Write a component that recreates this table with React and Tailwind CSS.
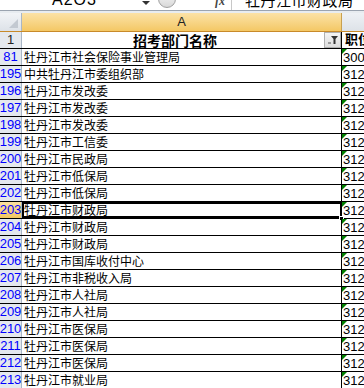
import React from 'react';

const rows = [
  { n: 81, name: '牡丹江市社会保险事业管理局', code: '30020' },
  { n: 195, name: '中共牡丹江市委组织部', code: '31210' },
  { n: 196, name: '牡丹江市发改委', code: '31220' },
  { n: 197, name: '牡丹江市发改委', code: '31220' },
  { n: 198, name: '牡丹江市发改委', code: '31220' },
  { n: 199, name: '牡丹江市工信委', code: '31220' },
  { n: 200, name: '牡丹江市民政局', code: '31220' },
  { n: 201, name: '牡丹江市低保局', code: '31220' },
  { n: 202, name: '牡丹江市低保局', code: '31220' },
  { n: 203, name: '牡丹江市财政局', code: '31220', selected: true },
  { n: 204, name: '牡丹江市财政局', code: '31220' },
  { n: 205, name: '牡丹江市财政局', code: '31220' },
  { n: 206, name: '牡丹江市国库收付中心', code: '31220' },
  { n: 207, name: '牡丹江市非税收入局', code: '31220' },
  { n: 208, name: '牡丹江市人社局', code: '31220' },
  { n: 209, name: '牡丹江市人社局', code: '31220' },
  { n: 210, name: '牡丹江市医保局', code: '31220' },
  { n: 211, name: '牡丹江市医保局', code: '31220' },
  { n: 212, name: '牡丹江市医保局', code: '31220' },
  { n: 213, name: '牡丹江市就业局', code: '31220' },
];

const cjk = "font-['Noto_Sans_CJK_SC',sans-serif]";
const arial = "font-['Liberation_Sans',Arial,sans-serif]";

// little green "number stored as text" flag
const GreenMark = () => (
  <div className="absolute left-0 top-0 w-0 h-0 border-t-[5px] border-r-[5px] border-t-[#008000] border-r-transparent" />
);

const FilterButton = () => (
  <div className="w-[17px] h-[16px] bg-gradient-to-b from-[#f4f4f4] to-[#dcdcdc] border border-[#b0b0b0] flex items-center justify-center">
    <svg width="12" height="10" viewBox="0 0 12 10">
      <path d="M1 8h3" stroke="#555" strokeWidth="1" />
      <path d="M4 1h7l-2.5 3v5h-2V4z" fill="#333" />
    </svg>
  </div>
);

export default function App() {
  return (
    <div className={`w-[364px] h-[388px] overflow-hidden bg-white ${arial}`}>
      {/* formula bar, top clipped */}
      <div className="h-[10px] flex items-end overflow-hidden bg-white">
        <div className="w-[156px] h-[10px] relative overflow-hidden">
          <span className="absolute left-[52px] -top-[9px] text-[16px] leading-[18px] text-black tracking-[1px]">A2O3</span>
          <span className="absolute left-[142px] top-[1px] w-0 h-0 border-l-[4px] border-r-[4px] border-t-[4px] border-l-transparent border-r-transparent border-t-[#333]" />
        </div>
        <div className="w-[24px] h-[10px] relative overflow-hidden">
          <div className="absolute left-[2px] -top-[10px] w-[18px] h-[18px] rounded-full border border-[#a0a0a0] bg-gradient-to-b from-[#fafafa] to-[#d8d8d8]" />
        </div>
        <div className="w-[52px] h-[10px] relative overflow-hidden">
          <span className="absolute left-[35px] -top-[6px] text-[12px] italic font-bold leading-[14px] text-[#444] font-['Liberation_Serif',serif]">fx</span>
          <div className="absolute left-[51px] top-0 w-px h-[10px] bg-[#c8c8c8]" />
        </div>
        <div className="flex-1 h-[10px] relative overflow-hidden">
          <span className={`absolute left-[13px] -top-[9px] text-[15px] leading-[18px] tracking-[0.5px] text-black ${cjk}`}>牡丹江市财政局</span>
        </div>
      </div>
      <div className="h-px bg-[#9ba4b0]" />
      <div className="h-[2px] bg-[#e8ecf0]" />

      {/* column headers */}
      <div className="flex h-[19px] border-b border-[#c88a2a]">
        <div className="w-[22px] relative bg-gradient-to-b from-[#f2f4f7] to-[#dde2e8] border-r border-[#a9b6c6]">
          <div className="absolute right-[3px] bottom-[3px] w-0 h-0 border-b-[9px] border-l-[9px] border-b-[#c3c9d1] border-l-transparent" />
        </div>
        <div className="w-[320px] bg-gradient-to-b from-[#fbe2a6] to-[#f4c864] flex items-center justify-center text-[13px] text-[#222] border-r border-[#c8a050]">
          A
        </div>
        <div className="flex-1 bg-gradient-to-b from-[#eef1f5] to-[#dde2e8]" />
      </div>

      {/* row 1 */}
      <div className="flex h-[17px] border-b border-black">
        <div className="w-[22px] bg-[#e4e8ee] border-r border-[#a9b6c6] flex items-center justify-center text-[13px] text-[#222]">1</div>
        <div className="w-[320px] flex items-center relative border-r border-black">
          <span className={`flex-1 text-center pl-[4px] text-[14px] font-bold leading-[17px] text-black ${cjk}`}>招考部门名称</span>
          <FilterButton />
        </div>
        <div className="flex-1 h-[16px] overflow-hidden">
          <div className={`pl-[3px] text-[13px] font-bold leading-[14px] text-black whitespace-nowrap ${cjk}`}>职位代码</div>
        </div>
      </div>

      {/* data rows */}
      {rows.map((r) => (
        <div key={r.n} className="flex h-[17px] border-b border-black">
          <div className={`w-[22px] border-r border-[#a9b6c6] flex items-center justify-center text-[13px] text-[#0000ff] overflow-hidden ${r.selected ? 'bg-gradient-to-b from-[#fbe0a0] to-[#f3c660]' : 'bg-[#e4e8ee]'}`}>
            {r.n}
          </div>
          <div className={`w-[320px] flex items-center pl-[2px] border-r border-black relative ${r.selected ? 'outline-2 outline-black -outline-offset-2' : ''}`}>
            <span className={`text-[12px] leading-[16px] text-black whitespace-nowrap ${cjk}`}>{r.name}</span>
            {r.selected && <div className="absolute -right-[3px] -bottom-[3px] w-[5px] h-[5px] bg-black border border-white" />}
          </div>
          <div className="flex-1 relative overflow-hidden flex items-end pl-[1px] text-[13px] leading-[15px] text-black whitespace-nowrap">
            <GreenMark />
            {r.code}
          </div>
        </div>
      ))}
    </div>
  );
}
